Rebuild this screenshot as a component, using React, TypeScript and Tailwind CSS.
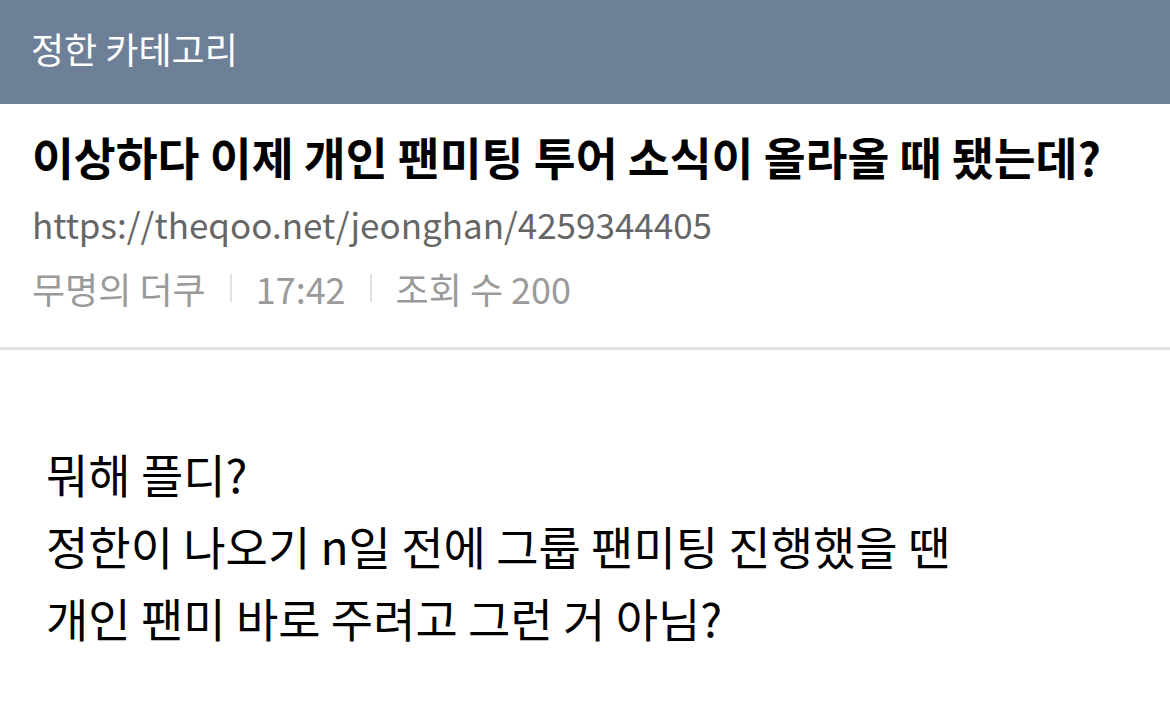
import React from "react";

const font = { fontFamily: '"Noto Sans CJK KR", "Noto Sans", sans-serif' };

export default function App() {
  return (
    <div className="w-[1170px] h-[722px] bg-white overflow-hidden" style={font}>
      <div className="h-[104px] bg-[#6e7f98] flex items-center px-[31px] pb-[8px]">
        <span className="text-white text-[36px] leading-[48px]">정한 카테고리</span>
      </div>
      <div className="px-[32px] pt-[22px] pb-[35px] border-b-[3px] border-[#e2e2e2]">
        <h1 className="text-[45.5px] font-bold text-black leading-[60px] whitespace-nowrap">
          이상하다 이제 개인 팬미팅 투어 소식이 올라올 때 됐는데?
        </h1>
        <div className="text-[35px] text-[#666666] leading-[48px] mt-[14px] whitespace-nowrap">
          https://theqoo.net/jeonghan/4259344405
        </div>
        <div className="text-[36px] text-[#9a9a9a] leading-[48px] mt-[16px] flex items-center whitespace-nowrap">
          <span>무명의 더쿠</span>
          <span className="w-[2px] h-[28px] bg-[#e2e2e2] mx-[24px]" />
          <span>17:42</span>
          <span className="w-[2px] h-[28px] bg-[#e2e2e2] mx-[24px]" />
          <span>조회 수 200</span>
        </div>
      </div>
      <div className="px-[46px] pt-[87px] text-[46px] text-black leading-[72px] whitespace-nowrap">
        <p>뭐해 플디?</p>
        <p>정한이 나오기 n일 전에 그룹 팬미팅 진행했을 땐</p>
        <p>개인 팬미 바로 주려고 그런 거 아님?</p>
      </div>
    </div>
  );
}
